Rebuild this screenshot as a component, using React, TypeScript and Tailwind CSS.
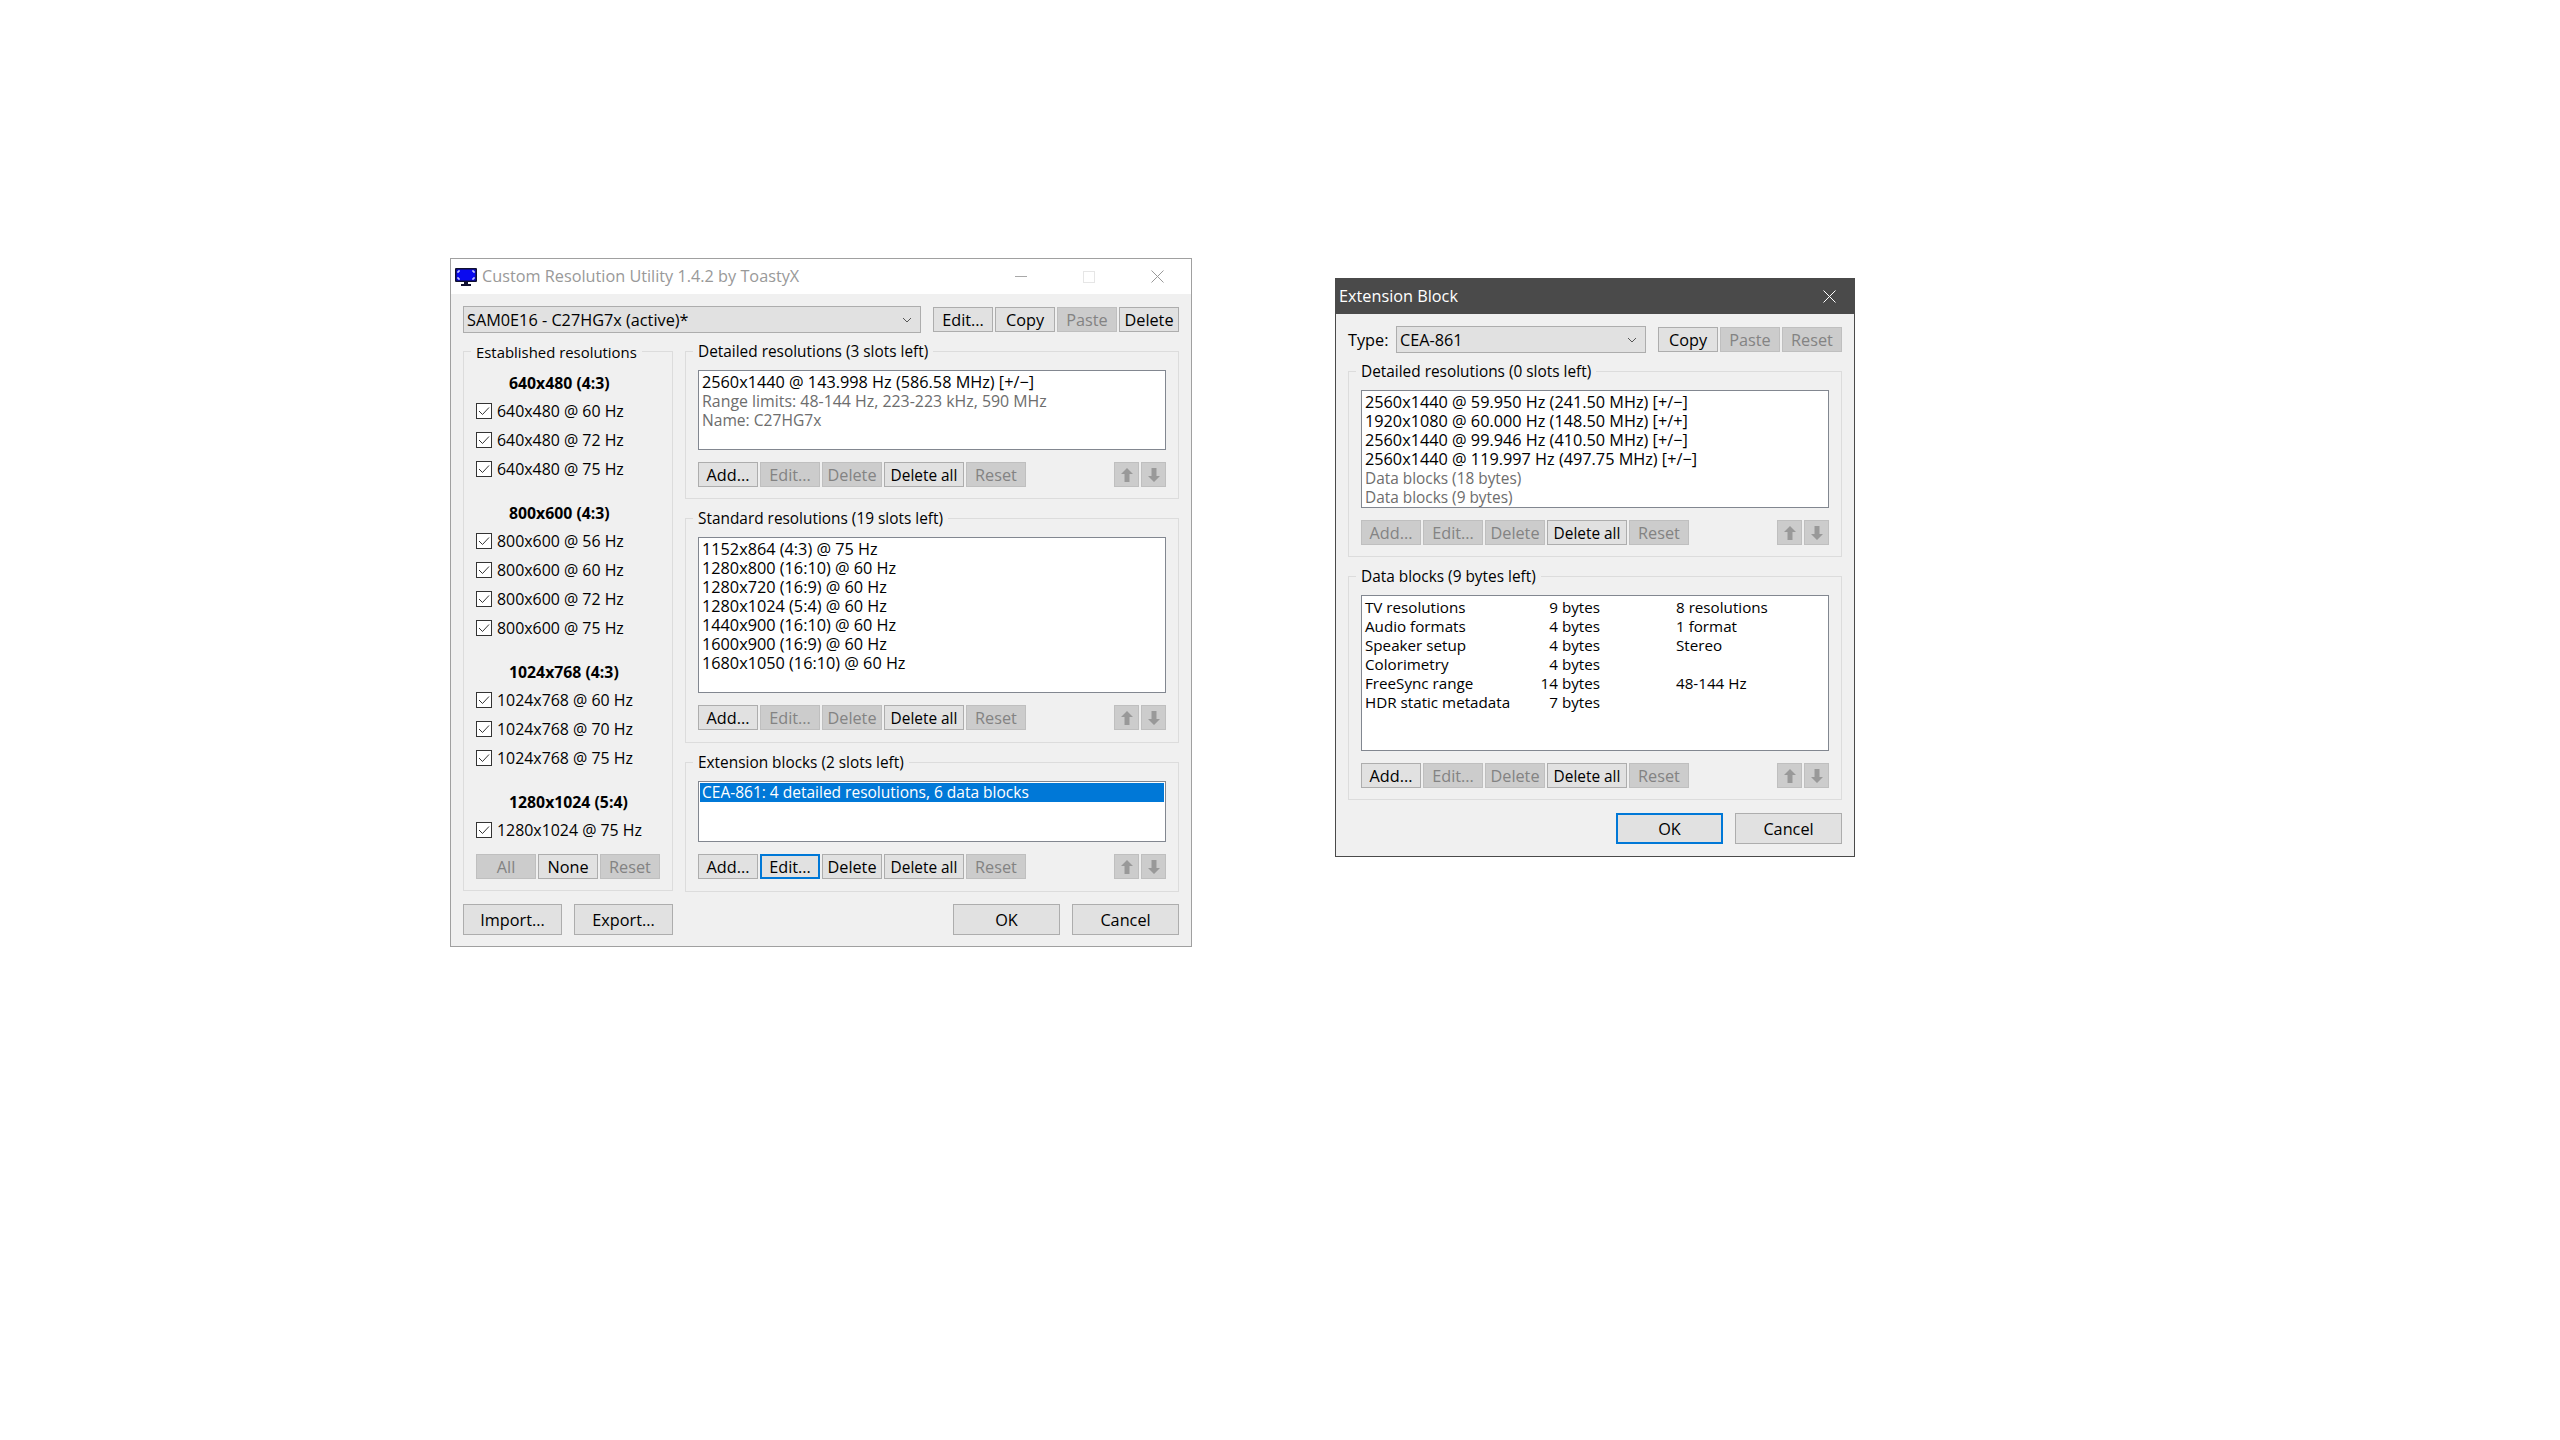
import type { ReactNode } from 'react'

const FONT = 'font-["Open_Sans","Noto_Sans",sans-serif]'

function Btn({
  label,
  off,
  focus,
  w = 'w-[60px]',
  h = 'h-[25px]',
}: {
  label: ReactNode
  off?: boolean
  focus?: boolean
  w?: string
  h?: string
}) {
  const look = off
    ? 'border bg-[#cccccc] border-[#bfbfbf] text-[#838383]'
    : focus
      ? 'border-2 bg-[#e1e1e1] border-[#0078d7] text-black'
      : 'border bg-[#e1e1e1] border-[#adadad] text-black'
  return <div className={`${w} ${h} shrink-0 flex items-center justify-center pt-[1px] ${look}`}>{label}</div>
}

function Arrow({ down }: { down?: boolean }) {
  return (
    <div className="w-[25px] h-[25px] shrink-0 flex items-center justify-center bg-[#cccccc] border border-[#bfbfbf]">
      <svg width="12" height="14" viewBox="0 0 12 14" className={down ? 'rotate-180' : ''}>
        <path d="M6 0 L12 6 H8.5 V14 H3.5 V6 H0 Z" fill="#999999" />
      </svg>
    </div>
  )
}

function Group({
  title,
  titleSize = 'text-[15.4px]',
  className,
  children,
}: {
  title: string
  titleSize?: string
  className: string
  children: ReactNode
}) {
  return (
    <div className={`relative border border-[#dcdcdc] ${className}`}>
      <span className={`absolute left-[7px] top-[-9px] bg-[#f0f0f0] px-[5px] leading-[18px] whitespace-nowrap ${titleSize}`}>
        {title}
      </span>
      {children}
    </div>
  )
}

function ListBox({ h, pad = 'pt-[2px]', children }: { h: string; pad?: string; children: ReactNode }) {
  return (
    <div className={`${h} bg-white border border-[#828790] ${pad} px-[3px] leading-[19px] overflow-hidden`}>
      {children}
    </div>
  )
}

function ActionRow({ add, edit, del }: { add?: boolean; edit?: boolean; del?: boolean }) {
  return (
    <div className="flex items-center gap-[2px] mt-[12px]">
      <Btn label="Add..." off={!add} />
      <Btn label="Edit..." off={!edit} focus={edit} />
      <Btn label="Delete" off={!del} />
      <Btn label={<span className="text-[15.4px]">Delete all</span>} w="w-[80px]" />
      <Btn label="Reset" off />
      <div className="ml-auto flex gap-[2px]">
        <Arrow />
        <Arrow down />
      </div>
    </div>
  )
}

function Combo({ text, className }: { text: string; className: string }) {
  return (
    <div
      className={`h-[27px] flex items-center justify-between bg-[#e1e1e1] border border-[#adadad] pl-[3px] pr-[8px] pt-[1px] ${className}`}
    >
      <span>{text}</span>
      <svg width="10" height="6" viewBox="0 0 10 6">
        <path d="M1 1 L5 5 L9 1" fill="none" stroke="#555555" strokeWidth="1" />
      </svg>
    </div>
  )
}

function Check({ label }: { label: string }) {
  return (
    <div className="h-[29px] flex items-center gap-[5px] whitespace-nowrap text-[15.9px]">
      <svg width="16" height="16" viewBox="0 0 16 16" className="shrink-0 mb-[2px]">
        <rect x="0.5" y="0.5" width="15" height="15" fill="#ffffff" stroke="#333333" />
        <path d="M3 8 L6.5 11.5 L13 4.5" fill="none" stroke="#333333" strokeWidth="1" />
      </svg>
      <span>{label}</span>
    </div>
  )
}

const established = [
  { head: '640x480 (4:3)', rows: ['640x480 @ 60 Hz', '640x480 @ 72 Hz', '640x480 @ 75 Hz'] },
  { head: '800x600 (4:3)', rows: ['800x600 @ 56 Hz', '800x600 @ 60 Hz', '800x600 @ 72 Hz', '800x600 @ 75 Hz'] },
  { head: '1024x768 (4:3)', rows: ['1024x768 @ 60 Hz', '1024x768 @ 70 Hz', '1024x768 @ 75 Hz'] },
  { head: '1280x1024 (5:4)', rows: ['1280x1024 @ 75 Hz'] },
]

const standard = [
  '1152x864 (4:3) @ 75 Hz',
  '1280x800 (16:10) @ 60 Hz',
  '1280x720 (16:9) @ 60 Hz',
  '1280x1024 (5:4) @ 60 Hz',
  '1440x900 (16:10) @ 60 Hz',
  '1600x900 (16:9) @ 60 Hz',
  '1680x1050 (16:10) @ 60 Hz',
]

const dataBlocks = [
  ['TV resolutions', '9 bytes', '8 resolutions'],
  ['Audio formats', '4 bytes', '1 format'],
  ['Speaker setup', '4 bytes', 'Stereo'],
  ['Colorimetry', '4 bytes', ''],
  ['FreeSync range', '14 bytes', '48-144 Hz'],
  ['HDR static metadata', '7 bytes', ''],
]

function MainWindow() {
  return (
    <div className="w-[742px] h-[689px] shrink-0 flex flex-col bg-[#f0f0f0] border border-[#a0a0a0]">
      <div className="h-[35px] shrink-0 bg-white flex items-center text-[#999999] pl-[4px]">
        <svg width="22" height="20" viewBox="0 0 22 20" className="shrink-0 mr-[5px]">
          <rect x="0" y="1" width="22" height="14" rx="1" fill="#101030" />
          <rect x="1.5" y="2.5" width="19" height="11" fill="#0a0af0" />
          <path d="M3 6 V4 H5 M17 4 H19 V6 M19 10 V12 H17 M5 12 H3 V10" fill="none" stroke="#ffffff" strokeWidth="1" />
          <rect x="9" y="15" width="4" height="2" fill="#101030" />
          <rect x="6" y="17" width="10" height="2" fill="#101030" />
        </svg>
        <span>Custom Resolution Utility 1.4.2 by ToastyX</span>
        <div className="ml-auto flex items-center gap-[56px] pr-[27px]">
          <div className="w-[12px] h-px bg-[#a8a8a8]" />
          <div className="w-[12px] h-[12px] border border-[#e6e6e6]" />
          <svg width="13" height="13" viewBox="0 0 13 13">
            <path d="M0.5 0.5 L12.5 12.5 M12.5 0.5 L0.5 12.5" stroke="#999999" strokeWidth="1" />
          </svg>
        </div>
      </div>

      <div className="flex-1 pt-[12px] px-[12px]">
        <div className="flex items-center gap-[2px]">
          <Combo text="SAM0E16 - C27HG7x (active)*" className="w-[458px] mr-[10px]" />
          <Btn label="Edit..." />
          <Btn label="Copy" />
          <Btn label="Paste" off />
          <Btn label="Delete" />
        </div>

        <div className="flex gap-[12px] mt-[18px]">
          <Group
            title="Established resolutions"
            titleSize="text-[14.9px]"
            className="w-[210px] h-[540px] shrink-0 px-[12px]"
          >
            <div className="pt-[17px]">
              {established.map((g, i) => (
                <div key={g.head} className={i > 0 ? 'mt-[15px]' : ''}>
                  <div className="h-[28px] flex items-center font-bold text-[15.8px] pl-[33px]">{g.head}</div>
                  {g.rows.map((r) => (
                    <Check key={r} label={r} />
                  ))}
                </div>
              ))}
            </div>
            <div className="flex gap-[2px] mt-[9px]">
              <Btn label="All" off />
              <Btn label="None" />
              <Btn label="Reset" off />
            </div>
          </Group>

          <div className="flex-1 flex flex-col">
            <Group title="Detailed resolutions (3 slots left)" className="h-[148px] px-[12px] pt-[18px]">
              <ListBox h="h-[80px]">
                <div>2560x1440 @ 143.998 Hz (586.58 MHz) [+/−]</div>
                <div className="text-[#6d6d6d] text-[15.9px]">Range limits: 48-144 Hz, 223-223 kHz, 590 MHz</div>
                <div className="text-[#6d6d6d] text-[15.6px]">Name: C27HG7x</div>
              </ListBox>
              <ActionRow add />
            </Group>

            <Group title="Standard resolutions (19 slots left)" className="h-[225px] mt-[19px] px-[12px] pt-[18px]">
              <ListBox h="h-[156px]">
                {standard.map((s) => (
                  <div key={s}>{s}</div>
                ))}
              </ListBox>
              <ActionRow add />
            </Group>

            <Group title="Extension blocks (2 slots left)" className="h-[130px] mt-[19px] px-[12px] pt-[18px]">
              <ListBox h="h-[61px]" pad="pt-[1px]">
                <div className="bg-[#0078d7] text-white text-[15.5px] -mx-[2px] px-[2px]">
                  CEA-861: 4 detailed resolutions, 6 data blocks
                </div>
              </ListBox>
              <ActionRow add edit del />
            </Group>
          </div>
        </div>

        <div className="flex mt-[12px]">
          <div className="flex gap-[12px]">
            <Btn label="Import..." w="w-[99px]" h="h-[31px]" />
            <Btn label="Export..." w="w-[99px]" h="h-[31px]" />
          </div>
          <div className="ml-auto flex gap-[12px]">
            <Btn label="OK" w="w-[107px]" h="h-[31px]" />
            <Btn label="Cancel" w="w-[107px]" h="h-[31px]" />
          </div>
        </div>
      </div>
    </div>
  )
}

function ExtensionWindow() {
  return (
    <div className="w-[520px] h-[579px] shrink-0 flex flex-col bg-[#f0f0f0] border border-[#4a4a4a] mt-[20px]">
      <div className="h-[35px] shrink-0 bg-[#4a4a4a] flex items-center justify-between text-white pl-[3px] pr-[18px]">
        <span>Extension Block</span>
        <svg width="13" height="13" viewBox="0 0 13 13">
          <path d="M0.5 0.5 L12.5 12.5 M12.5 0.5 L0.5 12.5" stroke="#ffffff" strokeWidth="1" />
        </svg>
      </div>

      <div className="flex-1 pt-[12px] px-[12px]">
        <div className="flex items-center gap-[2px]">
          <span className="w-[46px] shrink-0 pt-[1px]">Type:</span>
          <Combo text="CEA-861" className="w-[250px] mr-[10px]" />
          <Btn label="Copy" />
          <Btn label="Paste" off />
          <Btn label="Reset" off />
        </div>

        <Group title="Detailed resolutions (0 slots left)" className="h-[186px] mt-[18px] px-[12px] pt-[18px]">
          <ListBox h="h-[118px]">
            <div>2560x1440 @ 59.950 Hz (241.50 MHz) [+/−]</div>
            <div>1920x1080 @ 60.000 Hz (148.50 MHz) [+/+]</div>
            <div>2560x1440 @ 99.946 Hz (410.50 MHz) [+/−]</div>
            <div>2560x1440 @ 119.997 Hz (497.75 MHz) [+/−]</div>
            <div className="text-[#6d6d6d] text-[15.4px]">Data blocks (18 bytes)</div>
            <div className="text-[#6d6d6d] text-[15.4px]">Data blocks (9 bytes)</div>
          </ListBox>
          <ActionRow />
        </Group>

        <Group title="Data blocks (9 bytes left)" className="h-[224px] mt-[19px] px-[12px] pt-[18px]">
          <ListBox h="h-[156px]">
            {dataBlocks.map(([a, b, c]) => (
              <div key={a} className="flex whitespace-nowrap text-[15.2px]">
                <span className="w-[174px] shrink-0">{a}</span>
                <span className="w-[61px] shrink-0 text-right">{b}</span>
                <span className="ml-[76px]">{c}</span>
              </div>
            ))}
          </ListBox>
          <ActionRow add />
        </Group>

        <div className="flex justify-end gap-[12px] mt-[13px]">
          <Btn label="OK" w="w-[107px]" h="h-[31px]" focus />
          <Btn label="Cancel" w="w-[107px]" h="h-[31px]" />
        </div>
      </div>
    </div>
  )
}

export default function App() {
  return (
    <div className={`min-h-screen bg-white pl-[450px] pt-[258px] text-[16.25px] leading-[19px] text-black ${FONT}`}>
      <div className="flex items-start gap-[143px]">
        <MainWindow />
        <ExtensionWindow />
      </div>
    </div>
  )
}
